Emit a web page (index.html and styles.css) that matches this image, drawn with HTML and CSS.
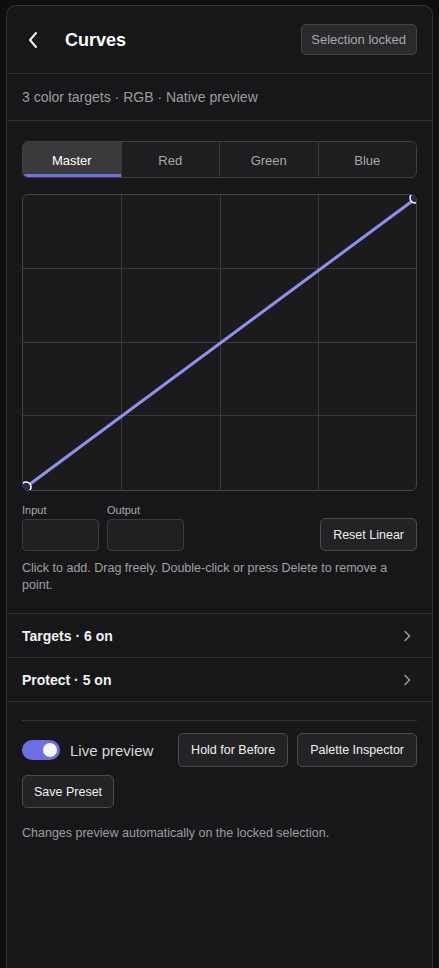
FILE: index.html
```html
<!DOCTYPE html>
<html lang="en">
<head>
  <meta charset="UTF-8" />
  <meta name="viewport" content="width=device-width, initial-scale=1.0"/>
  <title>Curves</title>
  <link rel="stylesheet" href="styles.css">
</head>
<body>
  <div class="panel">
    <header class="panel-head">
      <button class="back-btn" aria-label="Back">
        <svg width="12" height="18" viewBox="0 0 12 18"><path d="M9 2 L3 9 L9 16" fill="none" stroke="#f2f2f2" stroke-width="2" stroke-linecap="round" stroke-linejoin="round"/></svg>
      </button>
      <h1>Curves</h1>
      <span class="lock-badge">Selection locked</span>
    </header>

    <div class="summary">3 color targets · RGB · Native preview</div>

    <section class="editor">
      <div class="tabs">
        <button class="tab active">Master</button>
        <button class="tab">Red</button>
        <button class="tab">Green</button>
        <button class="tab">Blue</button>
      </div>

      <div class="graph">
        <svg width="395" height="295" viewBox="0 0 395 295">
          <g stroke="#3a3a3d" stroke-width="1">
            <line x1="98.5" y1="0" x2="98.5" y2="295"/>
            <line x1="197.5" y1="0" x2="197.5" y2="295"/>
            <line x1="295.5" y1="0" x2="295.5" y2="295"/>
            <line x1="0" y1="73.5" x2="395" y2="73.5"/>
            <line x1="0" y1="147.5" x2="395" y2="147.5"/>
            <line x1="0" y1="220.5" x2="395" y2="220.5"/>
          </g>
          <line x1="3" y1="292" x2="392" y2="4" stroke="#8d91f2" stroke-width="3"/>
          <circle cx="3" cy="292" r="5" fill="#222a5c" stroke="#ffffff" stroke-width="1.5"/>
          <circle cx="392" cy="3" r="5" fill="#222a5c" stroke="#ffffff" stroke-width="1.5"/>
        </svg>
      </div>

      <div class="point-row">
        <label class="field">
          <span>Input</span>
          <input type="text">
        </label>
        <label class="field">
          <span>Output</span>
          <input type="text">
        </label>
        <button class="btn reset-btn">Reset Linear</button>
      </div>

      <p class="hint">Click to add. Drag freely. Double-click or press Delete to remove a point.</p>
    </section>

    <div class="row-link">
      <span>Targets · 6 on</span>
      <svg width="8" height="12" viewBox="0 0 8 12"><path d="M2 1.5 L6.5 6 L2 10.5" fill="none" stroke="#9a9a9e" stroke-width="1.5" stroke-linecap="round"/></svg>
    </div>
    <div class="row-link">
      <span>Protect · 5 on</span>
      <svg width="8" height="12" viewBox="0 0 8 12"><path d="M2 1.5 L6.5 6 L2 10.5" fill="none" stroke="#9a9a9e" stroke-width="1.5" stroke-linecap="round"/></svg>
    </div>

    <section class="footer">
      <div class="actions">
        <label class="toggle">
          <span class="switch"><span class="knob"></span></span>
          Live preview
        </label>
        <button class="btn">Hold for Before</button>
        <button class="btn">Palette Inspector</button>
      </div>
      <div class="actions">
        <button class="btn save-btn">Save Preset</button>
      </div>
      <p class="note">Changes preview automatically on the locked selection.</p>
    </section>
  </div>
</body>
</html>
```

FILE: styles.css
```css
body {
  font-family: "Liberation Sans", Arial, sans-serif;
  margin: 0;
  padding: 5px 6px 0;
  background-color: #0e0e0f;
  color: #e8e8ea;
  height: 968px;
  box-sizing: border-box;
  overflow: hidden;
}
.panel {
  background-color: #17171a;
  border: 1px solid #333336;
  border-bottom: none;
  border-radius: 10px 10px 0 0;
  min-height: 980px;
}
.panel-head {
  display: flex;
  align-items: center;
  height: 67px;
  padding: 0 15px 0 20px;
  border-bottom: 1px solid #313134;
}
.back-btn {
  background: none;
  border: none;
  padding: 0;
  width: 18px;
  height: 20px;
  display: flex;
  align-items: center;
  cursor: pointer;
}
.panel-head h1 {
  font-size: 18px;
  font-weight: bold;
  margin: 1px 0 0 20px;
  color: #ffffff;
  flex: 1;
}
.lock-badge {
  font-size: 13px;
  color: #a8a8ac;
  background: #2a2a2d;
  border: 1px solid #444447;
  border-radius: 5px;
  padding: 7px 10px 7px 9px;
}
.summary {
  font-size: 14px;
  color: #9c9ca0;
  height: 46px;
  line-height: 46px;
  padding: 0 15px;
  border-bottom: 1px solid #313134;
}
.editor {
  padding: 20px 15px 19px;
  border-bottom: 1px solid #313134;
}
.tabs {
  display: flex;
  border: 1px solid #3e3e41;
  border-radius: 6px;
  overflow: hidden;
  height: 35px;
  background: #1e1e20;
}
.tab {
  flex: 1;
  background: none;
  border: none;
  border-left: 1px solid #3a3a3d;
  color: #a8a8ac;
  font-family: inherit;
  font-size: 13px;
  padding: 1px 0 0;
}
.tab:first-child {
  border-left: none;
}
.tab.active {
  background: #3a3a3c;
  color: #ffffff;
  box-shadow: inset 0 -3px 0 #6c70e6;
}
.graph {
  margin-top: 16px;
  border: 1px solid #444447;
  border-radius: 6px;
  background: #1b1b1d;
  height: 295px;
  overflow: hidden;
}
.graph svg {
  display: block;
}
.point-row {
  display: flex;
  align-items: flex-end;
  gap: 8px;
  margin-top: 13px;
}
.field {
  display: flex;
  flex-direction: column;
  gap: 3px;
  font-size: 11px;
  color: #a8a8ac;
}
.field input {
  width: 77px;
  height: 32px;
  box-sizing: border-box;
  background: #202022;
  border: 1px solid #3c3c3f;
  border-radius: 4px;
  color: #e8e8ea;
}
.btn {
  background: #232326;
  border: 1px solid #4a4a4d;
  border-radius: 5px;
  color: #f0f0f2;
  font-family: inherit;
  font-size: 12.5px;
  height: 34px;
  padding: 0 12px;
  cursor: pointer;
  white-space: nowrap;
}
.reset-btn {
  margin-left: auto;
  height: 33px;
}
.save-btn {
  height: 33px;
  padding: 0 11px;
}
.hint {
  font-size: 12.5px;
  line-height: 17px;
  color: #a0a0a4;
  margin: 9px 0 0;
}
.row-link {
  display: flex;
  justify-content: space-between;
  align-items: center;
  height: 43px;
  padding: 0 21px 0 15px;
  border-bottom: 1px solid #313134;
  font-size: 14px;
  font-weight: bold;
  color: #f2f2f4;
}
.footer {
  margin: 18px 15px 0;
  padding-top: 12px;
  border-top: 1px solid #333336;
}
.actions {
  display: flex;
  align-items: center;
  gap: 9px;
  margin-bottom: 8px;
}
.toggle {
  display: flex;
  align-items: center;
  gap: 10px;
  font-size: 15px;
  color: #d8d8dc;
  margin-right: auto;
}
.switch {
  width: 38px;
  height: 20px;
  border-radius: 10px;
  background: #6b6fe4;
  position: relative;
}
.knob {
  position: absolute;
  right: 3px;
  top: 3px;
  width: 14px;
  height: 14px;
  border-radius: 50%;
  background: #f6f6f8;
}
.note {
  font-size: 12.5px;
  color: #9c9ca0;
  margin: 18px 0 0;
}
```
